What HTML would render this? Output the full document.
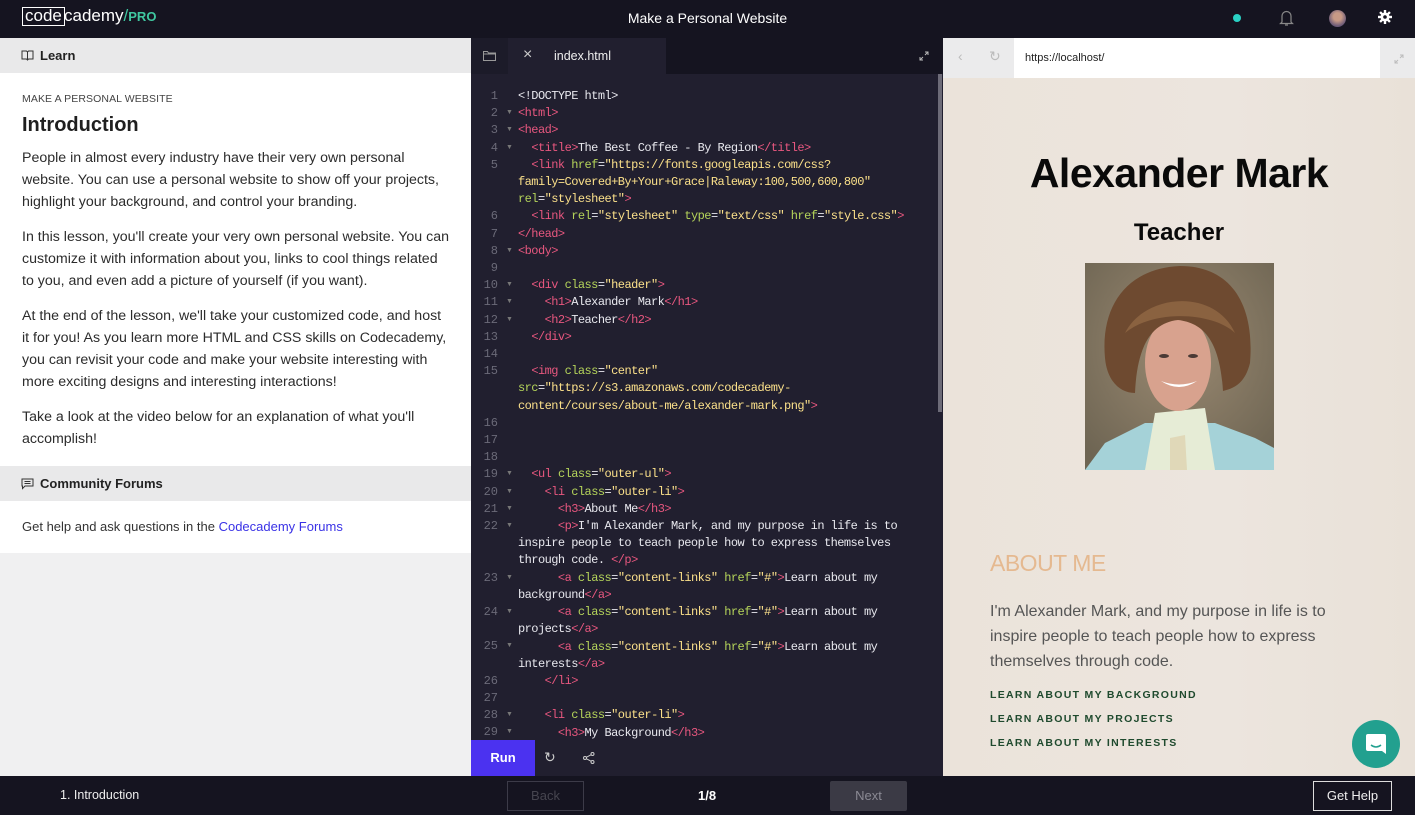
<!DOCTYPE html>
<html><head><meta charset="utf-8"><style>
*{box-sizing:border-box;margin:0;padding:0}
body{width:1415px;height:815px;overflow:hidden;background:#151420;font-family:"Liberation Sans",sans-serif;position:relative}
.abs{position:absolute}
#top{left:0;top:0;width:1415px;height:38px;background:#151420;color:#fff}
#left{left:0;top:38px;width:471px;height:738px;background:#f0f0f1}
.sechead{background:#e9e9ea;height:35px;font-weight:bold;font-size:13px;color:#222;padding-left:40px;line-height:35px;position:relative}
#lesson{background:#fff;padding:20px 22px 0 22px;height:393px;color:#333}
#lesson p{font-size:14.2px;line-height:22px;margin-bottom:13px;color:#2c2c2c}
#editor{left:471px;top:38px;width:472px;height:738px;background:#211f2f}
.code{font-family:"Liberation Mono",monospace;font-size:12px;letter-spacing:-0.55px;color:#e8e8ee;white-space:pre}
.t{color:#e8577f}.a{color:#b5d45a}.s{color:#fbe08a}
.ln{position:absolute;left:0;width:27px;text-align:right;color:#6b6a78;font-family:"Liberation Mono",monospace;font-size:12px}
.fd{position:absolute;left:35px;color:#777;font-size:7px}
#browser{left:943px;top:38px;width:472px;height:738px;background:linear-gradient(90deg,#ebe3da,#ece5de 60%,#e9e1d8)}
#bottom{left:0;top:776px;width:1415px;height:39px;background:#151420;color:#fff}
</style></head><body>

<div id="top" class="abs">
  <div class="abs" style="left:22px;top:7px;height:19px;border:1.5px solid #fff;padding:0 2px;font-size:17px;line-height:16px;color:#fff">code</div>
  <div class="abs" style="left:64px;top:6px;font-size:17px;color:#fff">cademy<span style="color:#3fc7a0;font-weight:normal">/</span><span style="color:#3fc7a0;font-weight:bold;font-size:13px">PRO</span></div>
  <div class="abs" style="left:0;width:1415px;top:10px;text-align:center;font-size:14px">Make a Personal Website</div>
  <div class="abs" style="left:1233px;top:14px;width:8px;height:8px;border-radius:50%;background:#2ad1c4"></div>
  <svg class="abs" style="left:1279px;top:9px" width="15" height="18" viewBox="0 0 15 18"><path d="M3 13V7a4.5 4.5 0 0 1 9 0v6l1.5 1.5h-12z M6 16h3" fill="none" stroke="#888" stroke-width="1.2"/></svg>
  <div class="abs" style="left:1329px;top:10px;width:17px;height:17px;border-radius:50%;background:radial-gradient(circle at 50% 40%,#c89a86 30%,#6b5a78 70%)"></div>
  <svg class="abs" style="left:1378px;top:10px" width="14" height="14" viewBox="0 0 14 14"><g fill="#fff"><circle cx="7" cy="7" r="4.5"/><rect x="5.8" y="0" width="2.4" height="14"/><rect x="0" y="5.8" width="14" height="2.4"/><rect x="5.8" y="0" width="2.4" height="14" transform="rotate(45 7 7)"/><rect x="5.8" y="0" width="2.4" height="14" transform="rotate(-45 7 7)"/></g><circle cx="7" cy="7" r="1.8" fill="#151420"/></svg>
</div>

<div id="left" class="abs">
  <div class="sechead"><svg class="abs" style="left:21px;top:12px" width="13" height="11" viewBox="0 0 13 11"><path d="M1 1h4.5l1 1 1-1H12v8H7.5l-1 1-1-1H1z M6.5 2v8" fill="none" stroke="#333" stroke-width="1"/></svg>Learn</div>
  <div id="lesson">
    <div style="font-size:10.5px;color:#444;letter-spacing:0.1px">MAKE A PERSONAL WEBSITE</div>
    <div style="font-size:20px;font-weight:bold;color:#1f1f1f;margin:9px 0 10px">Introduction</div>
    <p>People in almost every industry have their very own personal website. You can use a personal website to show off your projects, highlight your background, and control your branding.</p>
    <p>In this lesson, you'll create your very own personal website. You can customize it with information about you, links to cool things related to you, and even add a picture of yourself (if you want).</p>
    <p>At the end of the lesson, we'll take your customized code, and host it for you! As you learn more HTML and CSS skills on Codecademy, you can revisit your code and make your website interesting with more exciting designs and interesting interactions!</p>
    <p>Take a look at the video below for an explanation of what you'll accomplish!</p>
  </div>
  <div class="sechead"><svg class="abs" style="left:21px;top:12px" width="13" height="12" viewBox="0 0 13 12"><path d="M1 1h11v7H4l-2.5 2.5V8H1z M3.5 3.5h6 M3.5 5.5h6" fill="none" stroke="#333" stroke-width="1"/></svg>Community Forums</div>
  <div style="background:#fff;height:52px;padding:18px 22px;font-size:13px;color:#333">Get help and ask questions in the <span style="color:#3a32e6">Codecademy Forums</span></div>
</div>

<div id="editor" class="abs">
  <div class="abs" style="left:0;top:0;width:472px;height:36px;background:#151420"></div>
  <div class="abs" style="left:0;top:0;width:37px;height:36px;background:#1c1b29"></div>
  <svg class="abs" style="left:12px;top:13px" width="13" height="10" viewBox="0 0 13 10"><path d="M0.5 0.5h4l1 1.5h7v7.5h-12z M0.5 3h12" fill="none" stroke="#999" stroke-width="1"/></svg>
  <div class="abs" style="left:37px;top:0;width:158px;height:36px;background:#211f2f"></div>
  <div class="abs" style="left:52px;top:8px;color:#ccc;font-size:16px">×</div>
  <div class="abs" style="left:83px;top:11px;color:#eee;font-size:12.5px">index.html</div>
  <svg class="abs" style="left:448px;top:13px" width="10" height="10" viewBox="0 0 10 10"><path d="M6 1h3v3 M9 1L6 4 M4 9H1V6 M1 9l3-3" fill="none" stroke="#bbb" stroke-width="1"/></svg>
  <div class="abs" style="left:467px;top:36px;width:4px;height:338px;background:#6d6b78"></div>
  <div class="abs" style="left:0;top:50px;width:470px;height:652px;overflow:hidden">
    <div id="gut" class="abs" style="left:0;top:0"></div>
    <div class="abs code" style="left:47px;top:0;line-height:17.2px"><span>&lt;!DOCTYPE html&gt;
<span class="t">&lt;html&gt;</span>
<span class="t">&lt;head&gt;</span>
  <span class="t">&lt;title&gt;</span>The Best Coffee - By Region<span class="t">&lt;/title&gt;</span>
  <span class="t">&lt;link</span> <span class="a">href</span>=<span class="s">"https://fonts.googleapis.com/css?</span>
<span class="s">family=Covered+By+Your+Grace|Raleway:100,500,600,800"</span>
<span class="a">rel</span>=<span class="s">"stylesheet"</span><span class="t">&gt;</span>
  <span class="t">&lt;link</span> <span class="a">rel</span>=<span class="s">"stylesheet"</span> <span class="a">type</span>=<span class="s">"text/css"</span> <span class="a">href</span>=<span class="s">"style.css"</span><span class="t">&gt;</span>
<span class="t">&lt;/head&gt;</span>
<span class="t">&lt;body&gt;</span>

  <span class="t">&lt;div</span> <span class="a">class</span>=<span class="s">"header"</span><span class="t">&gt;</span>
    <span class="t">&lt;h1&gt;</span>Alexander Mark<span class="t">&lt;/h1&gt;</span>
    <span class="t">&lt;h2&gt;</span>Teacher<span class="t">&lt;/h2&gt;</span>
  <span class="t">&lt;/div&gt;</span>

  <span class="t">&lt;img</span> <span class="a">class</span>=<span class="s">"center"</span>
<span class="a">src</span>=<span class="s">"https://s3.amazonaws.com/codecademy-</span>
<span class="s">content/courses/about-me/alexander-mark.png"</span><span class="t">&gt;</span>



  <span class="t">&lt;ul</span> <span class="a">class</span>=<span class="s">"outer-ul"</span><span class="t">&gt;</span>
    <span class="t">&lt;li</span> <span class="a">class</span>=<span class="s">"outer-li"</span><span class="t">&gt;</span>
      <span class="t">&lt;h3&gt;</span>About Me<span class="t">&lt;/h3&gt;</span>
      <span class="t">&lt;p&gt;</span>I'm Alexander Mark, and my purpose in life is to
inspire people to teach people how to express themselves
through code. <span class="t">&lt;/p&gt;</span>
      <span class="t">&lt;a</span> <span class="a">class</span>=<span class="s">"content-links"</span> <span class="a">href</span>=<span class="s">"#"</span><span class="t">&gt;</span>Learn about my
background<span class="t">&lt;/a&gt;</span>
      <span class="t">&lt;a</span> <span class="a">class</span>=<span class="s">"content-links"</span> <span class="a">href</span>=<span class="s">"#"</span><span class="t">&gt;</span>Learn about my
projects<span class="t">&lt;/a&gt;</span>
      <span class="t">&lt;a</span> <span class="a">class</span>=<span class="s">"content-links"</span> <span class="a">href</span>=<span class="s">"#"</span><span class="t">&gt;</span>Learn about my
interests<span class="t">&lt;/a&gt;</span>
    <span class="t">&lt;/li&gt;</span>

    <span class="t">&lt;li</span> <span class="a">class</span>=<span class="s">"outer-li"</span><span class="t">&gt;</span>
      <span class="t">&lt;h3&gt;</span>My Background<span class="t">&lt;/h3&gt;</span></span></div>
  </div>
  <div class="abs" style="left:0;top:702px;width:472px;height:36px;background:#211f2f"></div>
  <div class="abs" style="left:0;top:702px;width:64px;height:36px;background:#4b32f0;color:#fff;font-weight:bold;font-size:13px;text-align:center;line-height:36px">Run</div>
  <div class="abs" style="left:73px;top:711px;color:#ccc;font-size:14px">↻</div>
  <svg class="abs" style="left:112px;top:714px" width="12" height="12" viewBox="0 0 12 12"><circle cx="9.5" cy="2" r="1.5" fill="none" stroke="#ccc"/><circle cx="2" cy="6" r="1.5" fill="none" stroke="#ccc"/><circle cx="9.5" cy="10" r="1.5" fill="none" stroke="#ccc"/><path d="M3.3 5.3L8.2 2.7M3.3 6.7l4.9 2.6" stroke="#ccc"/></svg>
</div>

<div id="browser" class="abs">
  <div class="abs" style="left:0;top:0;width:472px;height:40px;background:#ebebec"></div>
  <div class="abs" style="left:15px;top:10px;color:#bbb;font-size:14px">‹</div>
  <div class="abs" style="left:46px;top:10px;color:#bbb;font-size:14px">↻</div>
  <div class="abs" style="left:71px;top:0;width:366px;height:40px;background:#fff;font-size:11px;color:#222;padding:14px 0 0 11px">https://localhost/</div>
  <svg class="abs" style="left:451px;top:16px" width="10" height="10" viewBox="0 0 10 10"><path d="M6 1h3v3 M9 1L6 4 M4 9H1V6 M1 9l3-3" fill="none" stroke="#bbb" stroke-width="1"/></svg>
  <div class="abs" style="left:0;width:472px;top:112px;text-align:center;font-size:41px;font-weight:bold;color:#0a0a0a;letter-spacing:-0.5px">Alexander Mark</div>
  <div class="abs" style="left:0;width:472px;top:181px;text-align:center;font-size:24px;font-weight:bold;color:#0a0a0a">Teacher</div>
  <svg class="abs" style="left:142px;top:225px" width="189" height="207" viewBox="0 0 189 207">
    <defs><radialGradient id="bg" cx="50%" cy="40%" r="70%"><stop offset="0" stop-color="#9b8a72"/><stop offset="1" stop-color="#6e6553"/></radialGradient></defs>
    <rect width="189" height="207" fill="url(#bg)"/>
    <path d="M0 207 L20 180 60 160 130 160 170 175 189 185 189 207z" fill="#a5d2d8"/>
    <path d="M70 150 L120 145 130 207 60 207z" fill="#e6ecd6"/>
    <path d="M85 175 L100 172 102 207 85 207z" fill="#e0d8b8"/>
    <ellipse cx="93" cy="100" rx="33" ry="48" fill="#d8a28e"/>
    <path d="M20 95 C15 40 45 5 95 3 C145 3 170 40 165 100 C160 120 150 125 138 128 C135 80 120 60 93 57 C65 60 52 85 50 130 C35 130 22 118 20 95z" fill="#6e4a30"/>
    <path d="M40 70 C60 30 130 25 150 70 C130 50 70 45 40 70z" fill="#8a6240"/>
    <path d="M76 118 Q94 130 112 118 Q94 125 76 118z" fill="#fff"/>
    <ellipse cx="79" cy="93" rx="5" ry="2" fill="#4a3a35"/><ellipse cx="108" cy="93" rx="5" ry="2" fill="#4a3a35"/>
  </svg>
  <div class="abs" style="left:47px;top:512px;font-size:23px;color:#e5b990;letter-spacing:-0.5px">ABOUT ME</div>
  <div class="abs" style="left:47px;top:561px;width:370px;font-size:16px;line-height:25px;color:#555;font-weight:300">I'm Alexander Mark, and my purpose in life is to inspire people to teach people how to express themselves through code.</div>
  <div class="abs" style="left:47px;top:645px;font-size:10.5px;font-weight:bold;color:#1f4a2e;letter-spacing:1.3px;line-height:24px">LEARN ABOUT MY BACKGROUND<br>LEARN ABOUT MY PROJECTS<br>LEARN ABOUT MY INTERESTS</div>
  <div class="abs" style="left:409px;top:682px;width:48px;height:48px;border-radius:50%;background:#22a08f"></div>
  <svg class="abs" style="left:422px;top:695px" width="22" height="22" viewBox="0 0 22 22"><path d="M3 1h16a2 2 0 0 1 2 2v18l-4-3H3a2 2 0 0 1-2-2V3a2 2 0 0 1 2-2z" fill="#fff"/><path d="M6 12q5 4 10 0" fill="none" stroke="#22a08f" stroke-width="1.5"/></svg>
</div>

<div id="bottom" class="abs">
  <div class="abs" style="left:60px;top:12px;font-size:12.5px;color:#eee">1. Introduction</div>
  <div class="abs" style="left:507px;top:5px;width:77px;height:30px;border:1px solid #3c3b48;color:#46454f;font-size:13px;text-align:center;line-height:28px">Back</div>
  <div class="abs" style="left:698px;top:12px;font-size:13px;font-weight:bold;color:#fff">1/8</div>
  <div class="abs" style="left:830px;top:5px;width:77px;height:30px;background:#3b3a45;color:#8b8a94;font-size:13px;text-align:center;line-height:30px;border-radius:2px">Next</div>
  <div class="abs" style="left:1313px;top:5px;width:79px;height:30px;border:1px solid #ddd;color:#eee;font-size:13px;text-align:center;line-height:28px">Get Help</div>
</div>

<script>
var rows=[[1,0],[2,1],[3,1],[4,1],[5,0],[null],[null],[6,0],[7,0],[8,1],[9,0],[10,1],[11,1],[12,1],[13,0],[14,0],[15,0],[null],[null],[16,0],[17,0],[18,0],[19,1],[20,1],[21,1],[22,1],[null],[null],[23,1],[null],[24,1],[null],[25,1],[null],[26,0],[27,0],[28,1],[29,1]];
var h='';rows.forEach(function(r,i){if(r[0]==null)return;var y=i*17.2;h+='<div class="ln" style="top:'+y+'px;line-height:17.2px">'+r[0]+'</div>';if(r[1])h+='<div class="fd" style="top:'+(y+4)+'px">▼</div>';});
document.getElementById('gut').innerHTML=h;
</script>
</body></html>
